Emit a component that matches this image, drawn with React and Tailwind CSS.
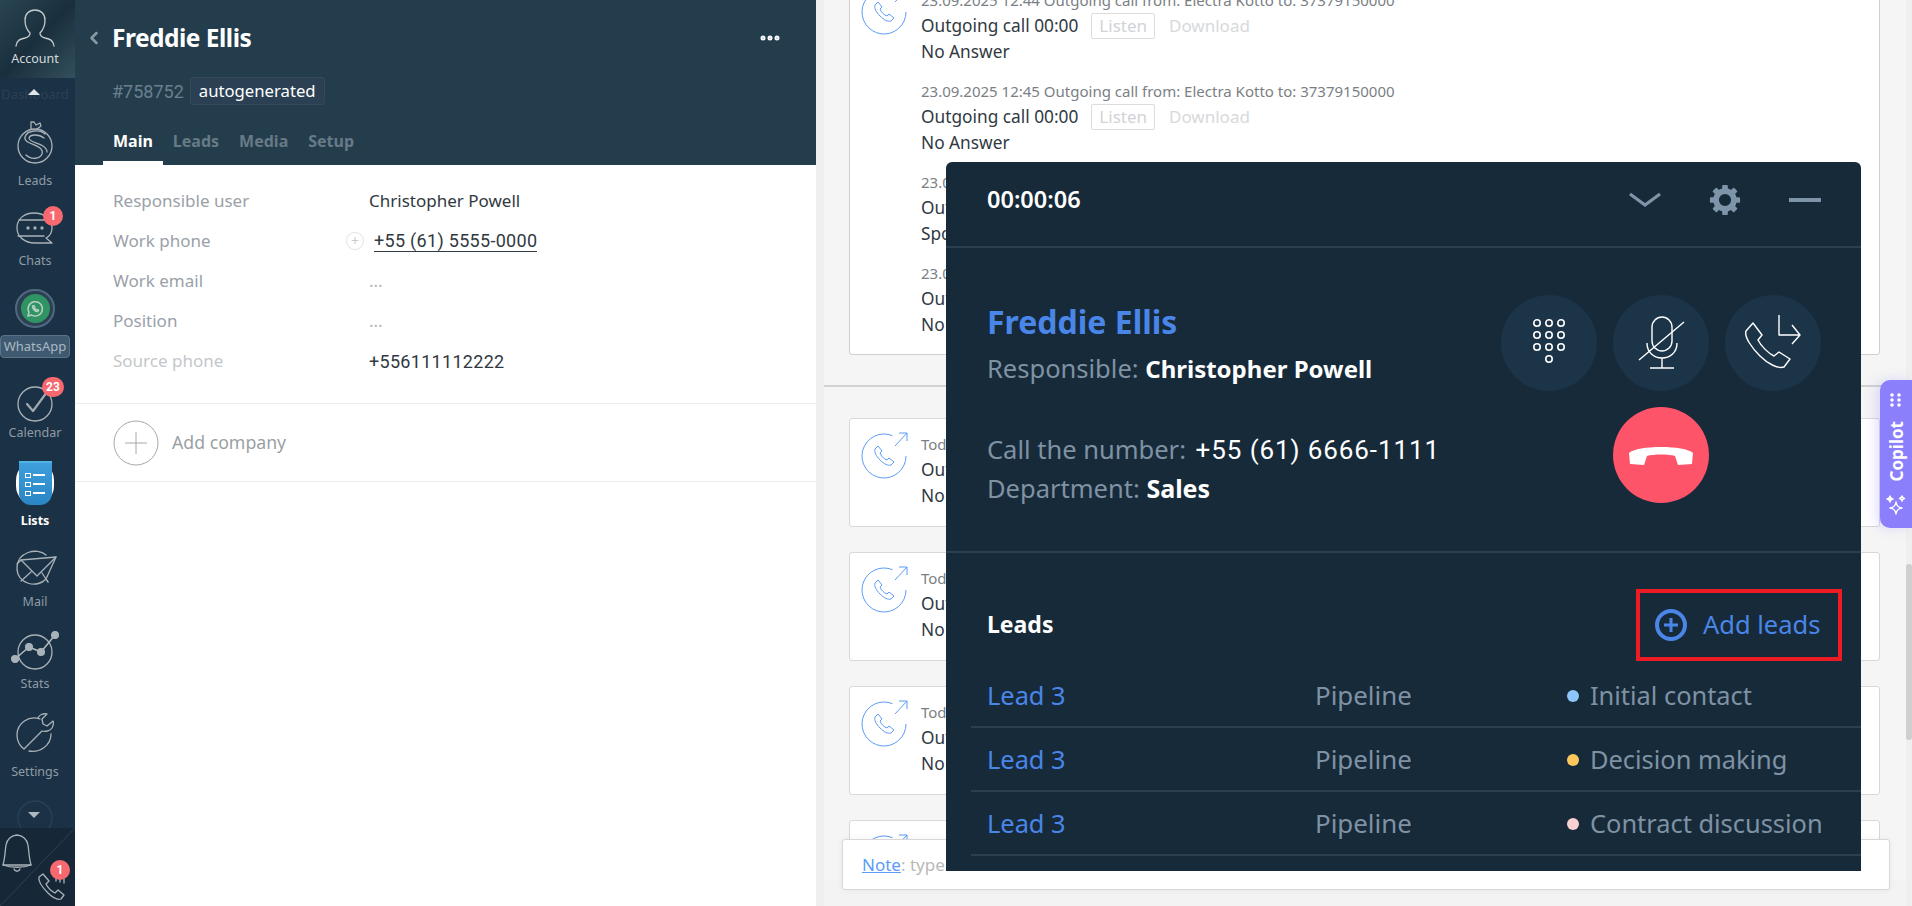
import React from 'react';
import { ChevronLeft, MoreHorizontal } from 'lucide-react';

const sans = "font-['Noto_Sans','Open_Sans',sans-serif]";

const Badge = ({ n, className }) => (
  <span className={`absolute flex h-[20px] min-w-[20px] items-center justify-center rounded-full bg-[#f8686f] px-1 font-['Roboto',sans-serif] text-[12px] font-bold text-white ${className}`}>{n}</span>
);

const Icon = ({ children, className = 'w-[44px] h-[44px]', vb = '0 0 44 44', sw = 1.3 }) => (
  <svg viewBox={vb} className={className} fill="none" stroke="#a9b2b8" strokeWidth={sw} strokeLinecap="round" strokeLinejoin="round">{children}</svg>
);

const NavItem = ({ label, h, children }) => (
  <div className={`relative flex shrink-0 flex-col items-center pr-[5px] ${h}`}>
    <div className="flex h-[44px] w-full items-center justify-center">{children}</div>
    <span className="mt-auto text-[12.5px] leading-[16px] text-[#8f9ca6]">{label}</span>
  </div>
);

const Sidebar = () => (
  <aside className="flex h-full w-[75px] shrink-0 flex-col items-stretch bg-[#1b3145]">
    <div className="relative flex h-[78px] shrink-0 flex-col items-center bg-gradient-to-br from-[#2a4552] via-[#1a2f3d] to-[#33505c] pr-[5px]">
      <Icon className="mt-[8px] h-[40px] w-[46px]" vb="0 0 46 40">
        <path d="M4 38c1-6 4-7 9-8 4-1 5-3 5-5-3-3-5-8-5-13 0-6 4-10 10-10s10 4 10 10c0 5-2 10-5 13 0 2 1 4 5 5 5 1 8 2 9 8" stroke="#c4cacd" />
      </Icon>
      <span className="mt-[3px] text-[12.5px] leading-[16px] text-[#d5dadc]">Account</span>
    </div>
    <div className="relative flex h-[34px] shrink-0 items-center justify-center pr-[5px]">
      <span className="text-[13px] text-[#2a4154]">Dashboard</span>
      <span className="absolute top-[11px] left-[28px] h-0 w-0 border-x-[6px] border-b-[6px] border-x-transparent border-b-[#dfe4e7]" />
    </div>
    <NavItem label="Leads" h="h-[69px] mt-[8px]">
      <Icon vb="0 0 44 48" className="h-[48px] w-[44px]">
        <circle cx="22" cy="28" r="17" />
        <path d="M18 11V4h3l2 3 4-2 1 3-4 3" />
        <path d="M32 16c-5-5-18-4-20 3-2 8 20 7 17 17-2 5-11 6-16 1" />
        <path d="M31 20c-5-4-14-4-15 0-1 5 18 5 18 14" />
      </Icon>
    </NavItem>
    <NavItem label="Chats" h="h-[65px] mt-[15px]">
      <Icon>
        <path d="M39 24c0-9-8-15-18-15S4 15 4 24s8 15 18 15h17l-6-5c4-2 6-6 6-10Z" />
        <path d="M6 16h32M5 32h26" />
        <circle cx="15" cy="24" r="1" fill="#a9b2b8" /><circle cx="22" cy="24" r="1" fill="#a9b2b8" /><circle cx="29" cy="24" r="1" fill="#a9b2b8" />
      </Icon>
      <Badge n="1" className="top-[2px] left-[43px]" />
    </NavItem>
    <div className="relative mt-[20px] flex h-[69px] shrink-0 flex-col items-center pr-[5px]">
      <div className="flex h-[40px] w-[40px] items-center justify-center rounded-full border-2 border-[#4f6a80] bg-[#2d3f52]">
        <div className="flex h-[29px] w-[29px] items-center justify-center rounded-full bg-[#2f9364]">
          <svg viewBox="0 0 24 24" className="h-[20px] w-[20px]" fill="none" stroke="#b5cfc3" strokeWidth="1.8" strokeLinecap="round" strokeLinejoin="round">
            <path d="M3.5 20.5l1.3-4.4A8.6 8.6 0 1 1 8 19.3Z" />
            <path d="M9 8.5c-.5 3 3.5 7 6.5 6.5l.8-1.5-2-1-.8.7c-1-.4-1.9-1.3-2.3-2.3l.7-.8-1-2Z" />
          </svg>
        </div>
      </div>
      <span className="mt-[7px] flex h-[23px] w-[70px] items-center justify-center rounded-[4px] border border-[#5a7488] bg-[#3f5a70] text-[13px] text-[#a9b8c3]">WhatsApp</span>
    </div>
    <NavItem label="Calendar" h="h-[61px] mt-[22px]">
      <Icon>
        <circle cx="22" cy="24" r="17" />
        <path d="M14 24l6 7 14-19" strokeWidth="2.2" stroke="#a0a9af" />
      </Icon>
      <Badge n="23" className="-top-[3px] left-[42px]" />
    </NavItem>
    <div className="relative mt-[20px] flex h-[68px] shrink-0 flex-col items-center pr-[5px]">
      <div className="relative flex h-[44px] w-[38px] items-center justify-center rounded-full bg-white">
        <div className="flex h-[44px] w-[33px] flex-col items-center justify-center gap-[4px] rounded-b-[12px] border-t-2 border-[#4fb3e5] bg-gradient-to-b from-[#3d9fdc] to-[#2a85c4]">
          {[0, 1, 2].map(i => (
            <div key={i} className="flex items-center gap-[2px]">
              <span className="h-[5px] w-[6px] border border-white" />
              <span className="h-[2px] w-[12px] bg-white" />
            </div>
          ))}
        </div>
      </div>
      <span className="mt-auto text-[12.5px] leading-[16px] font-bold text-white">Lists</span>
    </div>
    <NavItem label="Mail" h="h-[64px] mt-[17px]">
      <Icon>
        <path d="M33 9C24 1 4 6 4 22c0 16 20 21 29 11l10-22L8 14l-4 4M33 33l2 3" />
        <path d="M8 14l16 16 19-19M8 35l10-9M35 36l-6-9" />
      </Icon>
    </NavItem>
    <NavItem label="Stats" h="h-[62px] mt-[20px]">
      <Icon vb="0 0 52 44" className="h-[44px] w-[52px]">
        <circle cx="26" cy="22" r="17" />
        <path d="M6 29L20 17l12 5 14-17" stroke="#b6bdc2" strokeWidth="1.5" />
        <circle cx="6" cy="29" r="3.4" fill="#a9b2b8" /><circle cx="20" cy="17" r="3.4" fill="#a9b2b8" /><circle cx="32" cy="22" r="3.4" fill="#a9b2b8" /><circle cx="46" cy="5" r="3.4" fill="#a9b2b8" />
      </Icon>
    </NavItem>
    <NavItem label="Settings" h="h-[69px] mt-[19px]">
      <Icon>
        <path d="M27 8C16 4 4 12 4 24c0 6 3 11 7 14L29 20c3 1 8 0 10-3 1-2 2-5 1-7l-6 5-4-2-1-5 5-5c-4-1-8 1-9 4l2 1Z" />
        <path d="M16 40c10 2 22-5 22-17" />
      </Icon>
    </NavItem>
    <div className="relative flex flex-1 justify-center overflow-hidden">
      <svg viewBox="0 0 40 40" className="absolute top-[18px] left-[15px] h-[40px] w-[40px]" fill="none" stroke="#2b4254" strokeWidth="1.3">
        <circle cx="20" cy="20" r="17" />
      </svg>
      <span className="absolute top-[32px] left-[28px] h-0 w-0 border-x-[6px] border-t-[6px] border-x-transparent border-t-[#aeb8bf]" />
    </div>
    <div className="relative flex h-[78px] shrink-0 bg-[#162837]">
      <svg viewBox="0 0 75 78" className="absolute inset-0 h-full w-full" fill="none" stroke="#2c4252" strokeWidth="1">
        <path d="M75 0 0 78" />
      </svg>
      <Icon className="absolute top-[4px] left-[2px] h-[44px] w-[30px]" vb="0 0 30 44">
        <path d="M15 3a12 12 0 0 1 11 10c1 7 1 13 3 20H1c2-7 2-13 3-20A12 12 0 0 1 15 3Z" />
        <path d="M1 33c8 3 20 3 28 0M12 37c1 3 5 3 6 0" />
      </Icon>
      <Icon className="absolute bottom-[4px] left-[36px] h-[30px] w-[30px]" vb="0 0 30 30">
        <path d="M3 5l4-3 6 7-3 3c2 4 5 7 9 9l3-3 6 5-3 4c-3 1-8-1-13-6S2 9 3 5Z" />
        <path d="M20 4v5M24 5v5M28 7v4" />
      </Icon>
      <Badge n="1" className="top-[32px] left-[50px]" />
    </div>
  </aside>
);

const Field = ({ label, light, children }) => (
  <div className="flex h-[40px] items-center">
    <span className={`w-[256px] text-[17px] ${light ? 'text-[#c4c7ca]' : 'text-[#9aa1a8]'}`}>{label}</span>
    <div className="flex items-center text-[17px] text-[#313942]">{children}</div>
  </div>
);

const LeadCard = () => (
  <section className="flex h-full w-[741px] shrink-0 flex-col bg-white">
    <header className="flex h-[165px] shrink-0 flex-col bg-[#243d4c]">
      <div className="flex items-start justify-between pt-[20px] pr-[34px] pl-[9px]">
        <div className="flex items-center gap-[8px]">
          <ChevronLeft className="h-[20px] w-[20px] text-[#8a9aa5]" strokeWidth={3} />
          <h1 className="text-[24.5px] leading-[36px] font-bold tracking-[-0.5px] text-white">Freddie Ellis</h1>
        </div>
        <MoreHorizontal className="mt-[6px] h-[24px] w-[24px] text-white" strokeWidth={3} />
      </div>
      <div className="mt-[21px] flex items-center gap-[6px] pl-[37px]">
        <span className="font-['Roboto',sans-serif] text-[18px] text-[#6b808e]">#758752</span>
        <span className="flex h-[28px] items-center rounded-[3px] border border-[#34495a] bg-[#2b4153] px-[8px] text-[16.7px] text-white">autogenerated</span>
      </div>
      <nav className="mt-auto flex gap-[20px] pl-[28px] text-[16px] font-bold">
        <span className="border-b-[4px] border-white px-[10px] pb-[8px] text-white">Main</span>
        <span className="-ml-[10px] text-[#667a87]">Leads</span>
        <span className="text-[#667a87]">Media</span>
        <span className="text-[#667a87]">Setup</span>
      </nav>
    </header>
    <div className="flex flex-col border-b border-[#ebebeb] pt-[16px] pb-[22px] pl-[38px]">
      <Field label="Responsible user">Christopher Powell</Field>
      <Field label="Work phone">
        <span className="-ml-[23px] mr-[10px] flex h-[18px] w-[18px] items-center justify-center rounded-full border border-[#e3e3e3] text-[14px] leading-none text-[#ccc]">+</span>
        <span className="border-b border-[#313942] font-['Roboto',sans-serif] text-[18px] leading-[20px] tracking-[0.3px]">+55 (61) 5555-0000</span>
      </Field>
      <Field label="Work email"><span className="text-[#b5b5b5]">...</span></Field>
      <Field label="Position"><span className="text-[#b5b5b5]">...</span></Field>
      <Field label="Source phone" light><span className="font-['Roboto',sans-serif] text-[18px] tracking-[0.3px]">+556111112222</span></Field>
    </div>
    <div className="flex h-[78px] items-center gap-[13px] border-b border-[#ebebeb] pl-[38px]">
      <svg viewBox="0 0 46 46" className="h-[46px] w-[46px]" fill="none" stroke="#a4a8ab" strokeWidth="1">
        <circle cx="23" cy="23" r="22" /><path d="M23 12v22M12 23h22" />
      </svg>
      <span className="text-[17.7px] text-[#9b9fa3]">Add company</span>
    </div>
  </section>
);

const CallGlyph = ({ outgoing }) => (
  <svg viewBox="0 0 48 48" className="h-[48px] w-[48px] shrink-0" fill="none" stroke="#5b9bf8" strokeWidth="1">
    <path d="M45 24a22 22 0 1 1-13.5-20.3" />
    <path d="M14 17l3-3 4 5-2 2c1 3 4 6 7 7l2-2 5 4-3 3c-3 1-7-1-11-5s-6-8-5-11Z" />
    {outgoing && <path d="M34 14 46 1M38 1h8v8" />}
  </svg>
);

const CallEntry = ({ date, status, glyph, first }) => (
  <div className={`flex ${first ? '' : 'mt-[16px]'}`}>
    <div className="w-[58px] shrink-0 -mt-[1px]">{glyph}</div>
    <div className="ml-[2px] flex flex-col">
      <span className="h-[23px] text-[15px] leading-[23px] whitespace-nowrap text-[#7a7f85]">{date}</span>
      <div className="flex h-[28px] items-center">
        <span className="text-[17.3px] text-[#313942]">Outgoing call 00:00</span>
        <span className="ml-[13px] flex h-[26px] items-center rounded-[2px] border border-[#dcdcdc] px-[7px] text-[17px] text-[#d0d3d6]">Listen</span>
        <span className="ml-[14px] text-[17px] text-[#d7d9db]">Download</span>
      </div>
      <span className="text-[17.3px] leading-[24px] text-[#313942]">{status}</span>
    </div>
  </div>
);

const Today = () => (
  <article className="h-[109px] shrink-0 rounded-[3px] border border-[#d8d8d8] bg-white pt-[14px] pl-[11px]">
    <CallEntry first date="Today 12:46 Outgoing call from: Electra Kotto to: 37379150000" status="No Answer" glyph={<CallGlyph outgoing />} />
  </article>
);

const Feed = () => (
  <main className="relative flex-1 overflow-hidden border-l-[8px] border-[#efefef] bg-[#f5f5f5]">
    <div className="-mt-[26px] pr-[32px] pl-[25px]">
      <article className="h-[381px] rounded-[3px] border border-[#cfcfcf] bg-white pt-[14px] pl-[11px]">
        <CallEntry first date="23.09.2025 12:44 Outgoing call from: Electra Kotto to: 37379150000" status="No Answer" glyph={<CallGlyph outgoing />} />
        <CallEntry date="23.09.2025 12:45 Outgoing call from: Electra Kotto to: 37379150000" status="No Answer" />
        <CallEntry date="23.09.2025 12:45 Outgoing call from: Electra Kotto to: 37379150000" status="Spoke" />
        <CallEntry date="23.09.2025 12:46 Outgoing call from: Electra Kotto to: 37379150000" status="No Answer" />
      </article>
    </div>
    <div className="mt-[30px] mr-[6px] border-t-2 border-[#d2d2d2] pt-[31px] pr-[26px] pl-[25px]">
      <div className="flex flex-col gap-[25px]">
        <Today /><Today /><Today /><Today />
      </div>
    </div>
    <div className="absolute top-0 right-0 bottom-0 w-[6px] bg-[#efefef]">
      <div className="mt-[564px] h-[176px] rounded-[3px] bg-[#cfcfcf]" />
    </div>
  </main>
);

const RoundBtn = ({ children, className = 'bg-[#1c3448]' }) => (
  <div className={`flex h-[96px] w-[96px] items-center justify-center rounded-full ${className}`}>{children}</div>
);

const Row = ({ dot, stage }) => (
  <div className="ml-[25px] flex h-[64px] items-center border-b-2 border-[#2a3f4f] pt-[2px] text-[25.4px] leading-none">
    <span className="ml-[16px] w-[328px] text-[#4a86e8]">Lead 3</span>
    <span className="w-[251px] text-[25.9px] text-[#7f92a3]">Pipeline</span>
    <span className="ml-[1px] h-[12px] w-[12px] shrink-0 rounded-full" style={{ backgroundColor: dot }} />
    <span className="ml-[11px] whitespace-nowrap text-[#7f92a3]">{stage}</span>
  </div>
);

const Gear = () => (
  <svg viewBox="0 0 34 34" className="h-[32px] w-[32px]" fill="none" stroke="#7d94a9">
    <circle cx="17" cy="17" r="9.5" strokeWidth="6" />
    {[0, 45, 90, 135, 180, 225, 270, 315].map(a => (
      <rect key={a} x="14" y="1" width="6" height="6" rx="1" fill="#7d94a9" stroke="none" transform={`rotate(${a} 17 17)`} />
    ))}
  </svg>
);

const CallPanel = () => (
  <div className="absolute top-[162px] left-[946px] flex h-[709px] w-[915px] flex-col rounded-t-[6px] bg-[#172a3a] text-[25.5px]">
    <div className="flex h-[86px] shrink-0 items-center justify-between border-b-2 border-[#2a3f4f] pr-[40px] pb-[9px] pl-[41px]">
      <span className="text-[23.5px] font-semibold text-white">00:00:06</span>
      <div className="flex items-center">
        <svg viewBox="0 0 32 16" className="h-[16px] w-[32px]" fill="none" stroke="#7d94a9" strokeWidth="3.2">
          <path d="M1 2l15 11L31 2" />
        </svg>
        <div className="ml-[48px]"><Gear /></div>
        <div className="ml-[48px] h-[4px] w-[32px] bg-[#7d94a9]" />
      </div>
    </div>
    <div className="flex h-[305px] shrink-0 justify-between border-b-2 border-[#2a3f4f] pr-[40px] pl-[41px]">
      <div className="flex flex-col pt-[52px]">
        <h2 className="text-[32px] leading-[44px] font-bold text-[#4a86e8]">Freddie Ellis</h2>
        <p className="mt-[6px] leading-[36px] whitespace-nowrap text-[#7f92a3]">Responsible: <b className="text-[24px] font-bold text-white">Christopher Powell</b></p>
        <p className="mt-[44px] leading-[36px] whitespace-nowrap text-[#7f92a3]">Call the number: <span className="ml-[3px] font-['Roboto',sans-serif] text-[26px] tracking-[0.9px] text-white">+55 (61) 6666-1111</span></p>
        <p className="mt-[2px] leading-[36px] whitespace-nowrap text-[#7f92a3]">Department: <b className="text-[25px] font-bold text-white">Sales</b></p>
      </div>
      <div className="flex w-[320px] flex-col items-center pt-[47px]">
        <div className="flex gap-[16px]">
          <RoundBtn>
            <svg viewBox="0 0 36 48" className="h-[48px] w-[36px]" fill="none" stroke="white" strokeWidth="1.6">
              {[4, 16, 28, 40].map((y, r) => (r === 3 ? [18] : [6, 18, 30]).map(x => <circle key={`${x}-${y}`} cx={x} cy={y} r="3.2" />))}
            </svg>
          </RoundBtn>
          <RoundBtn>
            <svg viewBox="0 0 48 54" className="h-[54px] w-[48px]" fill="none" stroke="white" strokeWidth="1.4">
              <rect x="15" y="1" width="20" height="34" rx="10" />
              <path d="M10 27c0 20 30 20 30 0M25 42v10M13 52h24M2 44 47 6" />
            </svg>
          </RoundBtn>
          <RoundBtn>
            <svg viewBox="0 0 56 58" className="h-[58px] w-[56px]" fill="none" stroke="white" strokeWidth="1.4" strokeLinejoin="round">
              <path d="M34 1v20h21M47 11l8 10-8 9" />
              <path d="M1 17 8 9l9 12-4 5c3 6 10 13 16 16l5-4 11 7-6 8c-6 2-16-3-24-11S-1 23 1 17Z" />
            </svg>
          </RoundBtn>
        </div>
        <RoundBtn className="mt-[16px] bg-[#fd5469]">
          <svg viewBox="0 0 64 22" className="h-[22px] w-[64px]" fill="white">
            <path d="M1 20 0 9C8 1 56 1 64 9l-1 11-14 1-3-9c-6-2-22-2-28 0l-3 9Z" />
          </svg>
        </RoundBtn>
      </div>
    </div>
    <div className="flex h-[111px] shrink-0 items-center justify-between pt-[34px] pr-[19px] pb-[2px] pl-[41px]">
      <span className="text-[23px] font-bold text-white">Leads</span>
      <div className="flex h-[72px] w-[206px] items-center gap-[16px] border-[4px] border-[#ed1c24] pl-[15px]">
        <svg viewBox="0 0 32 32" className="h-[32px] w-[32px]" fill="none" stroke="#4a86e8" strokeWidth="4">
          <circle cx="16" cy="16" r="14" /><path d="M16 9v14M9 16h14" strokeWidth="3" />
        </svg>
        <span className="whitespace-nowrap text-[#4a86e8]">Add leads</span>
      </div>
    </div>
    <Row dot="#8ec5fc" stage="Initial contact" />
    <Row dot="#fcc85c" stage="Decision making" />
    <Row dot="#fbd0d0" stage="Contract discussion" />
  </div>
);

const Copilot = () => (
  <div className="absolute top-[380px] right-0 flex h-[148px] w-[32px] flex-col items-center justify-between rounded-l-[10px] bg-[#8b7ffb] py-[12px] shadow-[-4px_0_12px_rgba(139,127,251,0.25)]">
    <svg viewBox="0 0 14 14" className="h-[16px] w-[14px]" fill="white">
      {[2, 7, 12].map(y => [3, 10].map(x => <circle key={`${x}${y}`} cx={x} cy={y} r="1.8" />))}
    </svg>
    <span className="-rotate-180 text-[17px] leading-none font-bold text-white [writing-mode:vertical-rl]">Copilot</span>
    <svg viewBox="0 0 22 22" className="h-[22px] w-[22px]" fill="none" stroke="white" strokeWidth="1.5" strokeLinejoin="round">
      <path d="M11 8c.6 4 2 5.4 6 6-4 .6-5.4 2-6 6-.6-4-2-5.4-6-6 4-.6 5.4-2 6-6Z" />
      <path d="M5 2c.3 2 1 2.7 3 3-2 .3-2.700 1-3 3-.3-2-1-2.700-3-3 2-.3 2.700-1 3-3Z" fill="white" />
      <path d="M17 2c.3 1.5.8 2 2.500 2.500-1.700.3-2.200.8-2.500 2.500-.3-1.700-.8-2.200-2.500-2.500C16.200 4 16.700 3.500 17 2Z" />
    </svg>
  </div>
);

const NoteBar = () => (
  <>
    <div className="absolute top-[880px] right-[6px] bottom-0 left-[824px] bg-[#f3f3f3]" />
    <div className="absolute top-[839px] left-[842px] flex h-[51px] w-[1048px] items-center rounded-[3px] border border-[#d8d8d8] bg-white pl-[19px] text-[17px] text-[#b9b9b9] shadow-[0_0_6px_rgba(0,0,0,0.06)]">
      <span className="text-[#5b9bf8] underline">Note</span>: type here
    </div>
  </>
);

export default function App() {
  return (
    <div className={`relative flex h-[906px] w-[1912px] overflow-hidden ${sans}`}>
      <Sidebar />
      <LeadCard />
      <Feed />
      <NoteBar />
      <CallPanel />
      <Copilot />
    </div>
  );
}
